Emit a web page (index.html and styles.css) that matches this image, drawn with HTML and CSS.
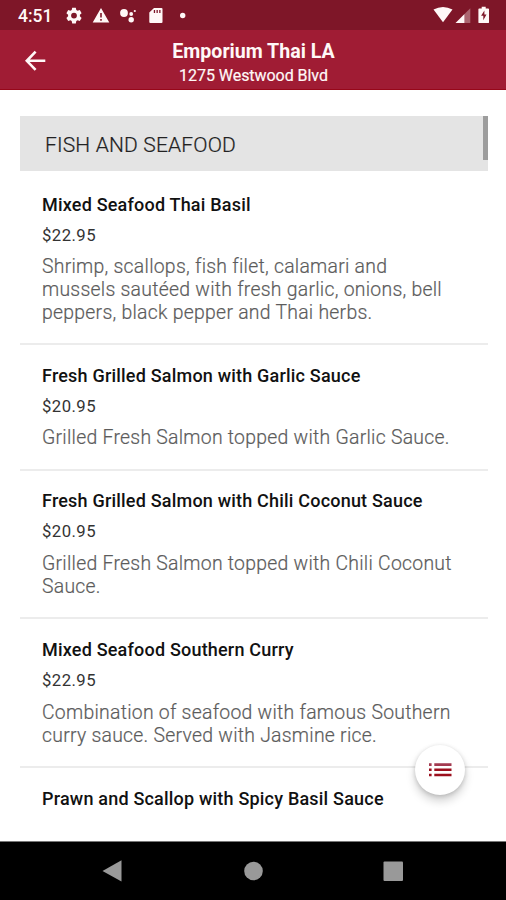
FILE: index.html
```html
<!DOCTYPE html>
<html lang="en">
<head>
<meta charset="utf-8">
<title>Emporium Thai LA</title>
<link rel="stylesheet" href="styles.css">
</head>
<body>
<div class="screen">
  <div class="status">
    <span class="clock">4:51</span>
    <svg class="notices" width="130" height="30" viewBox="0 0 130 30" fill="#fff8f7">
      <path fill-rule="evenodd" d="M12.200 7.700h3.600l.5 2.300 1.300.8 2.200-.7 1.800 3.100-1.700 1.600v1.500l1.700 1.600-1.800 3.100-2.200-.7-1.300.8-.5 2.300h-3.600l-.5-2.300-1.300-.8-2.200.7-1.800-3.100 1.700-1.600v-1.500l-1.700-1.600 1.800-3.100 2.200.7 1.300-.8zM14 12.700a2.900 2.900 0 1 0 0 5.800 2.900 2.900 0 0 0 0-5.800z"/>
      <path fill-rule="evenodd" d="M41 8l8.300 14.600H32.700zM40.200 13v4.600h1.600V13zM40.200 19v1.800h1.600V19z"/>
      <circle cx="64" cy="13" r="3.900"/><circle cx="71.200" cy="14" r="1.900"/><circle cx="71.200" cy="19.800" r="2.700"/><circle cx="74.800" cy="11" r="1.100"/>
      <path fill-rule="evenodd" d="M94 8h7.500q1 0 1 1v13q0 1-1 1H90.300q-1 0-1-1v-9.500zM93.800 10v3h1.300v-3zM96.500 10v3h1.300v-3zM99.200 10v3h1.300v-3z"/>
      <circle cx="122.700" cy="15.500" r="2.700"/>
    </svg>
    <svg class="signals" width="62" height="30" viewBox="0 0 62 30" fill="#fff8f7">
      <path d="M2.500 9.500Q12 4.300 21.500 9.500L12 22.200z"/>
      <path d="M24.500 23L33.500 14V23z"/><path fill-opacity=".35" d="M33.500 14L39.300 8.300V23h-5.800z"/>
      <path fill-rule="evenodd" d="M50.700 6.700h4v1.700h2.500q.8 0 .8.800v13q0 .9-.8.900h-9q-.8 0-.8-.9V9.200q0-.8.800-.8h2.500zM53.400 10.500l-3.300 5.300h2.200v4.500l3.200-5.700h-2.100z"/>
    </svg>
  </div>
  <header class="appbar">
    <svg class="back" width="22" height="22" viewBox="0 0 22 22" fill="none" stroke="#fff8f7" stroke-width="2.600"><path d="M21.300 11.800H3.500M11.600 2.600L2.800 11.800l8.800 9"/></svg>
    <div class="heading">
      <div class="name">Emporium Thai LA</div>
      <div class="address">1275 Westwood Blvd</div>
    </div>
  </header>
  <main class="menu">
    <div class="section"><span>FISH AND SEAFOOD</span><i class="thumb"></i></div>
    <article class="item">
      <h2>Mixed Seafood Thai Basil</h2>
      <div class="price">$22.95</div>
      <p>Shrimp, scallops, fish filet, calamari and<br>mussels sautéed with fresh garlic, onions, bell<br>peppers, black pepper and Thai herbs.</p>
    </article>
    <article class="item">
      <h2>Fresh Grilled Salmon with Garlic Sauce</h2>
      <div class="price">$20.95</div>
      <p>Grilled Fresh Salmon topped with Garlic Sauce.</p>
    </article>
    <article class="item">
      <h2>Fresh Grilled Salmon with Chili Coconut Sauce</h2>
      <div class="price">$20.95</div>
      <p>Grilled Fresh Salmon topped with Chili Coconut<br>Sauce.</p>
    </article>
    <article class="item">
      <h2>Mixed Seafood Southern Curry</h2>
      <div class="price">$22.95</div>
      <p>Combination of seafood with famous Southern<br>curry sauce. Served with Jasmine rice.</p>
    </article>
    <article class="item">
      <h2>Prawn and Scallop with Spicy Basil Sauce</h2>
    </article>
  </main>
  <div class="fab">
    <svg width="24" height="16" viewBox="0 0 24 16"><path fill="#a33a50" d="M1 1.300h2.600v2.700H1zM6.300 1.300h17.200v2.700H6.300z"/><path fill="#9c0f1d" d="M1 6.500h2.600v2.600H1zM6.300 6.500h17.200v2.600H6.300zM1 11.800h2.600v2.500H1zM6.300 11.800h17.200v2.500H6.300z"/></svg>
  </div>
  <nav class="nav">
    <svg width="506" height="58" viewBox="0 0 506 58" fill="#999"><path d="M102.500 29L121.500 18.200V39.500z"/><circle cx="253.500" cy="29" r="9.300"/><rect x="383.500" y="19.500" width="19.500" height="19.500" rx="1"/></svg>
  </nav>
</div>
</body>
</html>
```
FILE: styles.css
```css
* { box-sizing: border-box; }
body { margin: 0; font-family: Roboto, "Liberation Sans", sans-serif; background: #fff; }
.screen { position: relative; display: flex; flex-direction: column; width: 506px; height: 900px; overflow: hidden; }
svg { display: block; flex: none; }
.status { display: flex; flex: none; height: 30px; padding: 0 13px 0 18px; background: #7e1628; color: #fff8f7; }
.clock { width: 42px; font-size: 17.500px; font-weight: 500; line-height: 32px; }
.signals { margin-left: auto; }
.appbar { display: flex; flex: none; align-items: center; height: 60px; padding: 0 24px; background: #a01c34; border-bottom: 1px solid #970719; color: #fff8f7; }
.heading { flex: 1; margin-right: 22px; padding: 9px 0 0 1px; text-align: center; }
.name { font-size: 19.600px; font-weight: 700; line-height: 24px; }
.address { font-size: 16px; line-height: 24px; letter-spacing: -.05px; -webkit-text-stroke: .2px; }
.menu { flex: 1; min-height: 0; overflow: hidden; padding: 26px 18.500px 0 20px; }
.section { display: flex; justify-content: space-between; height: 55px; margin-bottom: 3px; padding-left: 25px; background: #e4e4e4; color: #222; font-size: 21px; font-weight: 300; line-height: 58px; letter-spacing: .17px; -webkit-text-stroke: .2px; }
.thumb { width: 5px; height: 43.500px; background: #9d9d9d; }
.item { padding: 18.800px 0 19.300px 22px; border-bottom: 2px solid #ececec; }
.item:last-child { border: 0; }
.item:nth-of-type(1) { padding-bottom: 18.800px; }
h2 { margin: 0; font-size: 18px; font-weight: 500; line-height: 24px; letter-spacing: .2px; color: #111; white-space: nowrap; }
.price { margin-top: 7px; font-size: 16.700px; line-height: 24px; letter-spacing: .45px; color: #333; }
p { margin: 7.500px 0 0; font-size: 19.400px; font-weight: 300; line-height: 23px; letter-spacing: .26px; color: #5c5c5c; -webkit-text-stroke: .2px; white-space: nowrap; }
.fab { position: absolute; left: 415px; top: 744.500px; display: flex; align-items: center; justify-content: center; width: 50px; height: 50px; border-radius: 50%; background: #fff; box-shadow: 0 6px 10px rgba(0,0,0,.18), 0 1px 4px rgba(0,0,0,.16); }
.nav { flex: none; height: 59px; border-top: 1px solid #777; background: #000; }
```
